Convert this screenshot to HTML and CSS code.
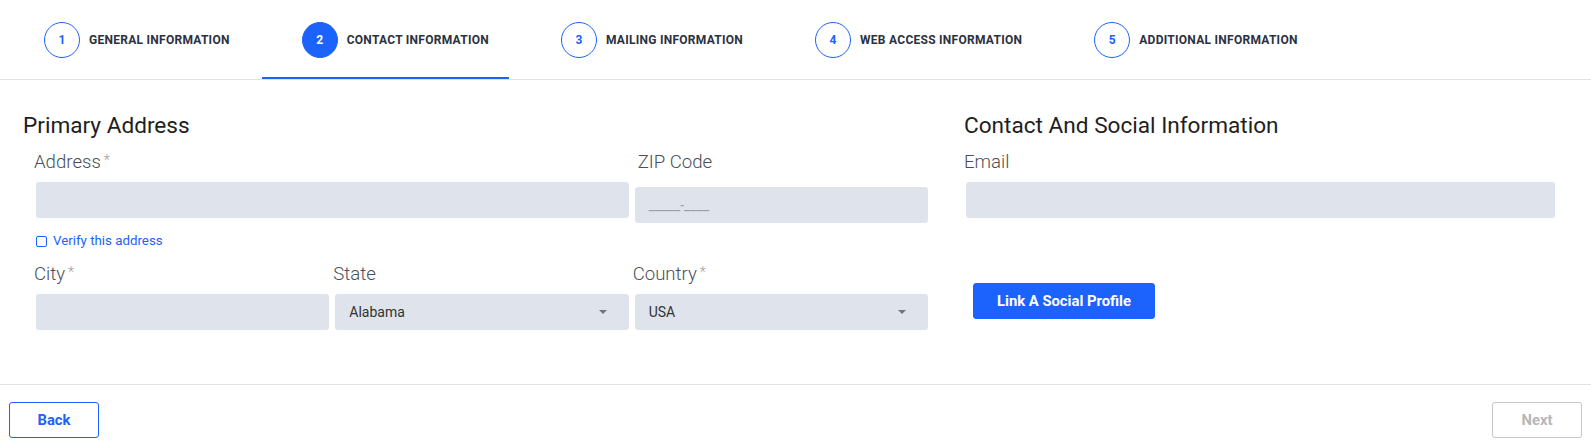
FILE: index.html
```html
<!DOCTYPE html>
<html lang="en">
<head>
<meta charset="utf-8">
<title>Contact Information</title>
<link rel="stylesheet" href="styles.css">
</head>
<body>
<nav class="tabs">
  <div class="tab"><span class="step">1</span><span class="tab-label">GENERAL INFORMATION</span></div>
  <div class="tab active"><span class="step">2</span><span class="tab-label">CONTACT INFORMATION</span></div>
  <div class="tab"><span class="step">3</span><span class="tab-label">MAILING INFORMATION</span></div>
  <div class="tab"><span class="step">4</span><span class="tab-label">WEB ACCESS INFORMATION</span></div>
  <div class="tab"><span class="step">5</span><span class="tab-label">ADDITIONAL INFORMATION</span></div>
</nav>
<main class="content">
  <section class="col-left">
    <h2 class="section-title">Primary Address</h2>
    <div class="grid">
      <div class="field span2">
        <label class="label">Address<span class="req">*</span></label>
        <div class="input"></div>
      </div>
      <div class="field zip">
        <label class="label">ZIP Code</label>
        <div class="input"><span class="ph">_____-____</span></div>
      </div>
      <div class="verify span3"><span class="cb"></span>Verify this address</div>
      <div class="field">
        <label class="label">City<span class="req">*</span></label>
        <div class="input"></div>
      </div>
      <div class="field">
        <label class="label">State</label>
        <div class="input select"><span class="val">Alabama</span><span class="caret"></span></div>
      </div>
      <div class="field">
        <label class="label">Country<span class="req">*</span></label>
        <div class="input select"><span class="val">USA</span><span class="caret"></span></div>
      </div>
    </div>
  </section>
  <section class="col-right">
    <h2 class="section-title">Contact And Social Information</h2>
    <div class="right-fields">
      <div class="field">
        <label class="label">Email</label>
        <div class="input"></div>
      </div>
      <button class="btn btn-primary" type="button">Link A Social Profile</button>
    </div>
  </section>
</main>
<footer class="footer">
  <button class="btn btn-outline" type="button">Back</button>
  <button class="btn btn-disabled" type="button">Next</button>
</footer>
</body>
</html>
```
FILE: styles.css
```css
* { box-sizing: border-box; }
html, body { margin: 0; padding: 0; background: #fff; }
body {
  font-family: Roboto, "Noto Sans", "Liberation Sans", sans-serif;
  color: #222;
  width: 1591px;
}

/* Tabs */
.tabs {
  display: flex;
  height: 80px;
  border-bottom: 1px solid #e2e2e2;
  padding-left: 4px;
  gap: 12px;
}
.tab {
  display: flex;
  align-items: center;
  height: 79px;
  padding: 0 20px 0 40px;
}
.tab.active { box-shadow: inset 0 -2px 0 #1c62fd; }
.step {
  width: 36px;
  height: 36px;
  border-radius: 50%;
  border: 1px solid #1c62fd;
  color: #1c62fd;
  font-size: 12px;
  font-weight: 700;
  display: flex;
  align-items: center;
  justify-content: center;
  margin-right: 9px;
  flex: none;
}
.tab.active .step { background: #1c62fd; color: #fff; }
.tab-label {
  font-size: 12px;
  font-weight: 700;
  color: #2b3140;
  letter-spacing: 0.27px;
  white-space: nowrap;
}

/* Content */
.content {
  display: flex;
  padding: 33px 36px 54px 23px;
}
.col-left { width: 905px; flex: none; }
.col-right { flex: 1; margin-left: 36px; }
.section-title {
  margin: 0 0 12px;
  font-size: 22.6px;
  line-height: 26px;
  font-weight: 400;
  color: #1e1e1e;
}
.grid {
  margin-left: 13px;
  display: grid;
  grid-template-columns: repeat(3, 1fr);
  column-gap: 6px;
}
.span2 { grid-column: span 2; }
.span3 { grid-column: span 3; }
.field { display: flex; flex-direction: column; }
.label {
  display: block;
  height: 22px;
  font-size: 18.6px;
  line-height: 22px;
  font-weight: 300;
  color: #4a4f57;
  margin: 0 0 9px -2px;
  white-space: nowrap;
}
.req {
  color: #9a9a9a;
  font-size: 14px;
  line-height: 0;
  margin-left: 3px;
  vertical-align: 3px;
}
.zip .label { margin-left: 3px; }
.zip .input { margin-top: 5px; margin-bottom: -5px; }
.input {
  height: 36px;
  background: #dfe3eb;
  border-radius: 3px;
  display: flex;
  align-items: center;
  padding: 0 14px;
  font-size: 14px;
  color: #333;
}
.ph { color: #9b9ea5; font-size: 14px; }
.select .val { flex: 1; }
.caret {
  width: 0;
  height: 0;
  border-left: 4px solid transparent;
  border-right: 4px solid transparent;
  border-top: 4px solid #757575;
  margin-right: 8px;
}
.verify {
  margin: 14px 0 13px;
  display: flex;
  align-items: center;
  font-size: 13.3px;
  line-height: 18px;
  color: #1c62fd;
}
.cb {
  width: 11px;
  height: 11px;
  border: 1.3px solid #1c62fd;
  border-radius: 2px;
  margin-right: 6px;
}
.right-fields { margin-left: 2px; }
.right-fields .label { margin-left: -2px; }

/* Buttons */
.btn {
  font-family: Roboto, "Noto Sans", "Liberation Sans", sans-serif;
  font-size: 14.8px;
  font-weight: 700;
  height: 36px;
  border-radius: 3px;
  cursor: pointer;
  padding: 0;
}
.btn-primary {
  margin: 65px 0 0 7px;
  width: 182px;
  background: #1c62fd;
  border: 1px solid #1c62fd;
  color: #fff;
}
.footer {
  border-top: 1px solid #e2e2e2;
  padding: 17px 9px;
  display: flex;
  justify-content: space-between;
}
.btn-outline {
  width: 90px;
  background: #fff;
  border: 1px solid #1c62fd;
  color: #1c62fd;
}
.btn-disabled {
  width: 90px;
  background: #fff;
  border: 1px solid #c6c6c6;
  color: #b7b7b7;
}
```
